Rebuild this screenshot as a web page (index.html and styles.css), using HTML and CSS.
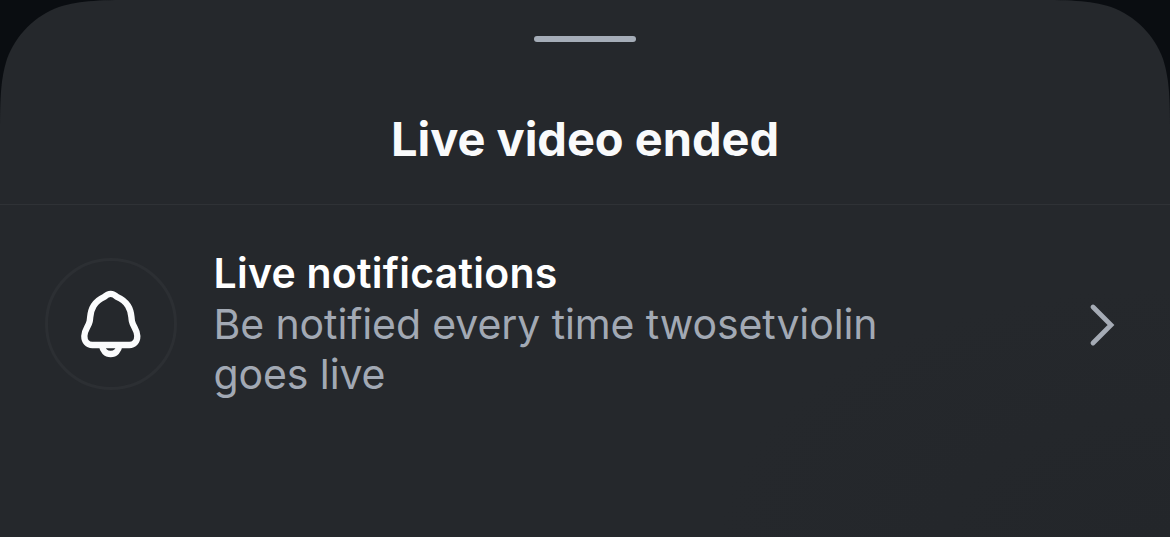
FILE: index.html
```html
<!DOCTYPE html>
<html lang="en">
<head>
    <meta charset="UTF-8">
    <meta name="viewport" content="width=device-width, initial-scale=1.0">
    <title>Live video ended</title>
    <link rel="stylesheet" href="styles.css">
</head>
<body>
    <div class="sheet">
        <div class="sheet-header">
            <div class="handle"></div>
            <h1 class="title">Live video ended</h1>
        </div>
        <div class="row">
            <div class="icon-circle">
                <!-- bell -->
                <svg class="bell" viewBox="130 120 190 215">
                    <path d="M225 137.500C216 137.500 212 141 206 146.500C198 150 183 159 174 173C162 192 165 205 162 220C158 238 146 246 146 264C146 281 156 291 170 291H281C295 291 305 281 305 264C305 246 293 238 289 220C286 205 289 192 277 173C268 159 252 150 244 146.500C238 141 234 137.500 225 137.500Z"/>
                    <path d="M199 292C201 308 211 318 225 318C239 318 249 308 251 292"/>
                </svg>
            </div>
            <div class="row-text">
                <div class="row-title">Live notifications</div>
                <div class="row-desc">Be notified every time twosetviolin<br>goes live</div>
            </div>
            <!-- right arrow -->
            <svg class="chevron" viewBox="0 0 26 44">
                <path d="M4 4L22 22L4 40"/>
            </svg>
        </div>
    </div>
</body>
</html>
```
FILE: styles.css
```css
* {
    box-sizing: border-box;
}
body {
    margin: 0;
    background-color: #0a0d11;
    font-family: Inter, "Liberation Sans", sans-serif;
}
.sheet {
    width: 1170px;
    height: 537px;
    background: radial-gradient(ellipse 450px 250px at 1170px 537px, #23262a 0%, #25282c 100%);
    clip-path: path("M143 0C101.8 0 81.2 0 59 7C34.9 15.8 15.8 34.9 7 59C0 81.2 0 101.8 0 143V537H1170V143C1170 101.8 1170 81.2 1163 59C1154.2 34.9 1135.1 15.8 1111 7C1088.8 0 1068.2 0 1027 0Z");
}
.sheet-header {
    display: flex;
    flex-direction: column;
    align-items: center;
    height: 205px;
    padding-top: 36px;
    border-bottom: 1px solid #2f3236;
}
.handle {
    width: 102px;
    height: 6px;
    border-radius: 3px;
    background-color: #a5adb8;
}
.title {
    margin: 68px 0 0;
    font-size: 47px;
    line-height: 58px;
    font-weight: 700;
    letter-spacing: -0.05px;
    color: #f9fafb;
    white-space: nowrap;
}
.row {
    display: flex;
    align-items: center;
    height: 152px;
    margin-top: 43px;
    padding: 0 55px 0 45px;
}
.icon-circle {
    display: flex;
    align-items: center;
    justify-content: center;
    width: 132px;
    height: 132px;
    border: 3px solid #2c2f33;
    border-radius: 50%;
}
.bell {
    width: 63.3px;
    height: 71.7px;
    fill: none;
    stroke: #fafbfc;
    stroke-width: 19;
}
.row-text {
    flex: 1;
    margin-left: 36.5px;
    margin-bottom: 2px;
    font-size: 41px;
    line-height: 50px;
    white-space: nowrap;
}
.row-title {
    font-weight: 600;
    line-height: 51px;
    letter-spacing: 0.25px;
    color: #fff;
}
.row-desc {
    letter-spacing: -0.1px;
    color: #a2a9b4;
}
.chevron {
    width: 26px;
    height: 44px;
    margin-top: 2px;
    fill: none;
    stroke: #a5abb5;
    stroke-width: 4.8;
    stroke-linecap: round;
    stroke-linejoin: miter;
}
```
